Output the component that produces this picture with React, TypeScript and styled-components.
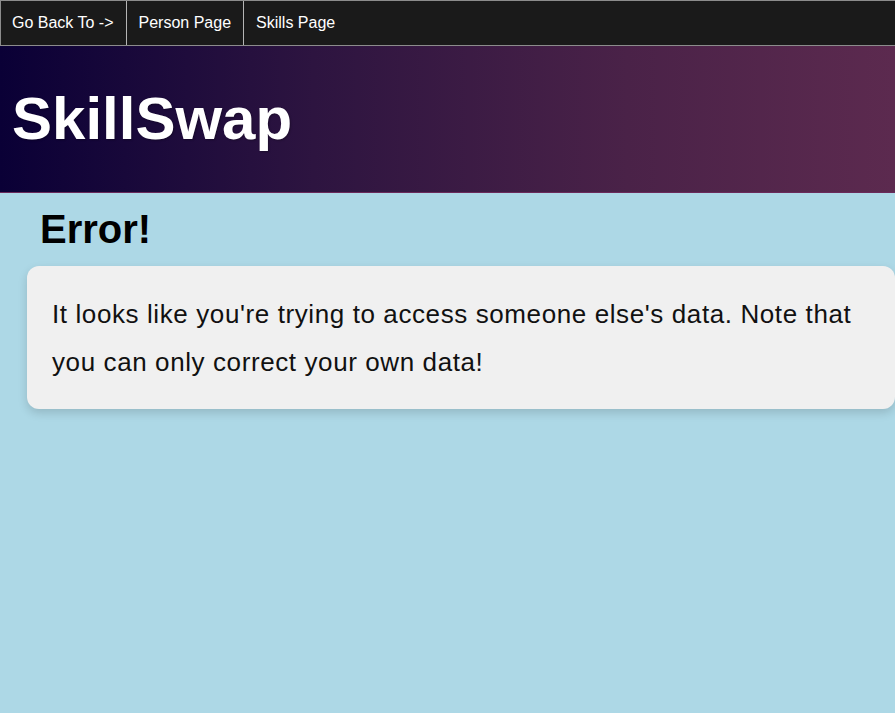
import React from 'react';
import styled, { createGlobalStyle } from 'styled-components';

const GlobalStyle = createGlobalStyle`
	html, body {
		margin: 0;
		padding: 0;
		height: 100%;
		background: #add8e6;
		font-family: "Liberation Sans", Arial, sans-serif;
		overflow: hidden;
	}
	#root {
		min-height: 100%;
	}
`;

const NavBar = styled.nav`
	display: flex;
	height: 44px;
	background: #1a1a1a;
	border: 1px solid #8c8c8c;
	border-right: none;
	.nav-item {
		display: flex;
		align-items: center;
		padding: 0 12px;
		color: #ffffff;
		font-size: 16px;
		text-decoration: none;
		border-right: 1px solid #b5b5b5;
		&:first-child {
			padding-left: 11px;
		}
		&:last-child {
			border-right: none;
		}
	}
`;

const Header = styled.header`
	display: flex;
	align-items: center;
	height: 146px;
	padding: 0 12px;
	background: linear-gradient(to right, #0a0036, #2d1440 35%, #4a2248 70%, #5c2a4f);
	border-bottom: 1px solid #6a2a5a;
	h1 {
		margin: 0;
		color: #ffffff;
		font-size: 60px;
		font-weight: 700;
		line-height: 1;
		text-shadow: 1px 1px 2px rgba(0, 0, 0, 0.3);
	}
`;

const Main = styled.main`
	display: flex;
	flex-flow: column;
	padding: 14px 0 0 27px;
	.error-title {
		margin: 0 0 14px 13px;
		font-size: 40px;
		font-weight: 700;
		line-height: 45px;
		color: #000000;
	}
`;

const Card = styled.section`
	padding: 24px 25px 23px;
	background: #f0f0f0;
	border-radius: 12px;
	box-shadow: 0 4px 10px rgba(0, 0, 0, 0.15);
	p {
		margin: 0;
		font-size: 26px;
		letter-spacing: 0.6px;
		line-height: 48px;
		color: #111111;
	}
`;

//에러 페이지
export default function App() {
	return (
		<>
			<GlobalStyle />
			<NavBar>
				<a className="nav-item" href="#">Go Back To -&gt;</a>
				<a className="nav-item" href="#">Person Page</a>
				<a className="nav-item" href="#">Skills Page</a>
			</NavBar>
			<Header>
				<h1>SkillSwap</h1>
			</Header>
			<Main>
				<h2 className="error-title">Error!</h2>
				<Card>
					<p>
						It looks like you're trying to access someone else's data. Note that
						you can only correct your own data!
					</p>
				</Card>
			</Main>
		</>
	);
}
